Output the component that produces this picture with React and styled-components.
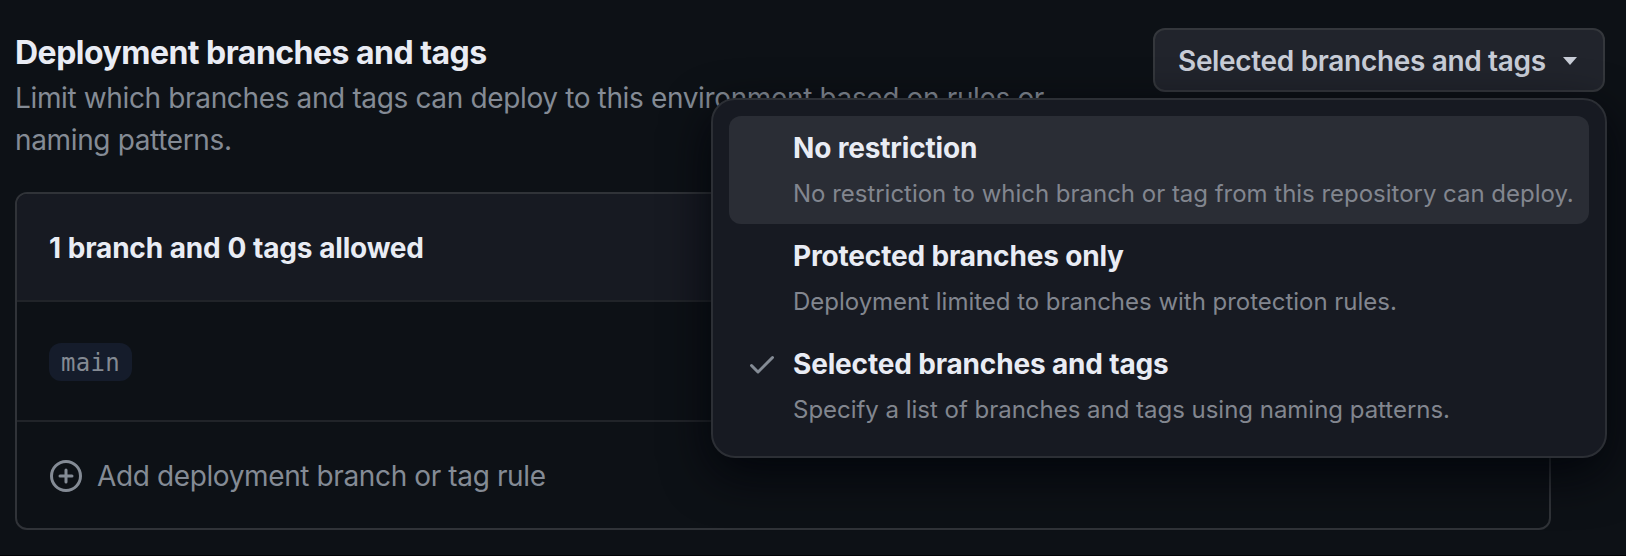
import React from 'react';
import styled, { createGlobalStyle } from 'styled-components';

const GlobalStyle = createGlobalStyle`
  * { box-sizing: border-box; }
  html, body { margin: 0; background: #0d1116; overflow: hidden; }
  body { font-family: Inter, "Liberation Sans", sans-serif; font-size: 28px; line-height: 42px; color: #e9ecf4; }
`;

const Page = styled.main`
  height: 556px;
  padding: 28px 21px 0 15px;
  border-bottom: 1px solid #020306;
  background: #0d1116;
`;

const SectionHeader = styled.header`
  display: flex;
  justify-content: space-between;
  align-items: flex-start;
`;

const Intro = styled.div`
  width: 1060px;
`;

const Title = styled.h2`
  margin: 0;
  padding-top: 1px;
  font-size: 32px;
  line-height: 48px;
  font-weight: 650;
  letter-spacing: ${(p) => p.$track};
  white-space: nowrap;
`;

const Subtitle = styled.p`
  margin: 0;
  color: #848b95;
  letter-spacing: ${(p) => p.$track};
`;

const Dropdown = styled.div`
  position: relative;
`;

const DropdownButton = styled.button`
  display: flex;
  align-items: center;
  width: 452px;
  height: 64px;
  padding: 2px 23px 0;
  border: 2px solid #34373c;
  border-radius: 12px;
  background: #21242c;
  color: #c8cdd7;
  font: inherit;
  font-weight: 600;
  letter-spacing: ${(p) => p.$track};
  white-space: nowrap;
`;

const Caret = styled.span`
  margin-left: auto;
  margin-right: 3px;
  border: 7.5px solid transparent;
  border-top: 8px solid currentColor;
  border-bottom: 0;
`;

const Menu = styled.ul`
  position: absolute;
  top: calc(100% + 6px);
  right: -2px;
  width: 896px;
  margin: 0;
  padding: 16px;
  list-style: none;
  border: 2px solid #2c2f35;
  border-radius: 24px;
  background: #171a22;
  box-shadow: 0 16px 48px rgba(1, 4, 9, 0.85);
`;

const MenuItem = styled.li`
  display: grid;
  grid-template-columns: 47px 1fr;
  height: 108px;
  padding: 11px 0 0 17px;
  border-radius: 12px;
  background: ${(p) => (p.$active ? '#2a2d35' : 'transparent')};
`;

const CheckSlot = styled.span`
  display: flex;
  align-items: center;
  height: 42px;
  color: #848b95;
`;

const ItemTitle = styled.div`
  font-weight: 650;
  letter-spacing: ${(p) => p.$track};
  white-space: nowrap;
`;

const ItemText = styled.div`
  margin-top: 7px;
  font-size: 24px;
  line-height: 36px;
  color: #82868f;
  letter-spacing: ${(p) => p.$track};
  white-space: nowrap;
`;

const Panel = styled.section`
  width: 1536px;
  margin-top: 31px;
  border: 2px solid #303338;
  border-radius: 12px;
  overflow: hidden;
`;

const Row = styled.div`
  display: flex;
  align-items: center;
  height: ${(p) => p.$height}px;
  padding: 2px 32px 0;
  border-top: ${(p) => (p.$divided ? '2px solid #212429' : '0')};
  white-space: nowrap;
`;

const PanelHeader = styled(Row)`
  background: #171a22;
  font-weight: 650;
  letter-spacing: ${(p) => p.$track};
  word-spacing: 0.5px;
`;

const AddRule = styled(Row)`
  gap: 15px;
  padding-left: 33px;
  color: #848b95;
  letter-spacing: ${(p) => p.$track};
`;

const BranchTag = styled.code`
  height: 38px;
  padding: 1px 12px 0;
  border-radius: 12px;
  background: #151c2b;
  color: #848a93;
  font-family: "DejaVu Sans Mono", monospace;
  font-size: 24px;
  line-height: 38px;
  letter-spacing: 0.3px;
`;

const CheckIcon = () => (
  <svg width="32" height="32" viewBox="0 0 16 16" fill="currentColor">
    <path d="M13.78 4.22a.75.75 0 0 1 0 1.06l-7.25 7.25a.75.75 0 0 1-1.06 0L2.22 9.28a.751.751 0 0 1 .018-1.042.751.751 0 0 1 1.042-.018L6 10.94l6.72-6.72a.75.75 0 0 1 1.06 0Z" />
  </svg>
);

const PlusCircleIcon = () => (
  <svg width="32" height="32" viewBox="0 0 16 16" fill="none" stroke="currentColor" strokeWidth="1.5" strokeLinecap="round">
    <circle cx="8" cy="8" r="7.25" />
    <path d="M8 5v6M5 8h6" />
  </svg>
);

const options = [
  {
    title: 'No restriction',
    text: 'No restriction to which branch or tag from this repository can deploy.',
    active: true,
  },
  {
    title: 'Protected branches only',
    text: 'Deployment limited to branches with protection rules.',
  },
  {
    title: 'Selected branches and tags',
    text: 'Specify a list of branches and tags using naming patterns.',
    selected: true,
  },
];

export default function App() {
  return (
    <>
      <GlobalStyle />
      <Page>
        <SectionHeader>
          <Intro>
            <Title $track="-0.52px">Deployment branches and tags</Title>
            <Subtitle $track="-0.36px">
              Limit which branches and tags can deploy to this environment based on rules or naming patterns.
            </Subtitle>
          </Intro>
          <Dropdown>
            <DropdownButton $track="-0.33px">
              Selected branches and tags
              <Caret />
            </DropdownButton>
            <Menu>
              {options.map((option) => (
                <MenuItem key={option.title} $active={option.active}>
                  <CheckSlot>{option.selected && <CheckIcon />}</CheckSlot>
                  <div>
                    <ItemTitle $track="-0.17px">{option.title}</ItemTitle>
                    <ItemText $track="-0.02px">{option.text}</ItemText>
                  </div>
                </MenuItem>
              ))}
            </Menu>
          </Dropdown>
        </SectionHeader>
        <Panel>
          <PanelHeader $height={106} $track="-0.2px">1 branch and 0 tags allowed</PanelHeader>
          <Row $height={120} $divided>
            <BranchTag>main</BranchTag>
          </Row>
          <AddRule $height={108} $divided $track="-0.38px">
            <PlusCircleIcon />
            Add deployment branch or tag rule
          </AddRule>
        </Panel>
      </Page>
    </>
  );
}
